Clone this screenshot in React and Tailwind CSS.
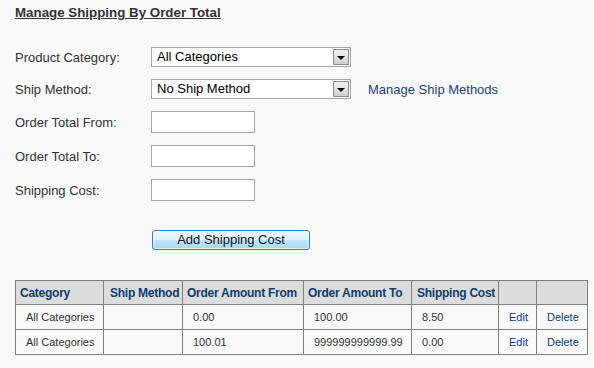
const rows = [
  { category: "All Categories", method: "", from: "0.00", to: "100.00", cost: "8.50" },
  { category: "All Categories", method: "", from: "100.01", to: "999999999999.99", cost: "0.00" },
];

function FakeSelect({ value }) {
  return (
    <div className="flex h-[20px] w-[200px] items-center border border-[#a5a5a5] bg-white">
      <span className="flex-1 pl-[5px] text-[13px] leading-[18px] text-black">{value}</span>
      <span className="m-[1px] flex h-[16px] w-[16px] items-center justify-center border border-[#8c8c8c] bg-[linear-gradient(#f4f4f4,#cfcfcf)]">
        <span className="mt-[1px] h-0 w-0 border-x-[4px] border-t-[4px] border-x-transparent border-t-black" />
      </span>
    </div>
  );
}

function TextBox() {
  return <input type="text" className="h-[22px] w-[104px] border border-[#a5a5a5] bg-white px-1 text-[13px] outline-none" />;
}

function FormRow({ label, children }) {
  return (
    <div className="flex items-center">
      <label className="w-[136px] pt-[1px] text-[13px] leading-[16px] text-[#333]">{label}</label>
      {children}
    </div>
  );
}

export default function App() {
  return (
    <div className="min-h-[368px] bg-[#f9f9f9] px-[15px] pt-[5px] font-['Liberation_Sans',Arial,sans-serif]">
      <h1 className="text-[13.33px] font-bold leading-[16px] text-[#333] underline">Manage Shipping By Order Total</h1>

      <div className="mt-[26px] flex flex-col gap-[12px]">
        <FormRow label="Product Category:">
          <FakeSelect value="All Categories" />
        </FormRow>
        <FormRow label="Ship Method:">
          <FakeSelect value="No Ship Method" />
          <a href="#" className="ml-[17px] pt-[1px] text-[13px] leading-[16px] text-[#1d3f7e]">
            Manage Ship Methods
          </a>
        </FormRow>
        <FormRow label="Order Total From:">
          <TextBox />
        </FormRow>
        <FormRow label="Order Total To:">
          <TextBox />
        </FormRow>
        <FormRow label="Shipping Cost:">
          <TextBox />
        </FormRow>
      </div>

      <button
        type="button"
        className="mt-[29px] ml-[137px] h-[20px] w-[158px] rounded-[3px] border border-[#3d7bad] bg-[linear-gradient(#ecf7fd_0%,#dcf1fc_50%,#c0e6fb_50%,#a8d9f4_100%)] text-[13px] leading-[16px] text-[#111] shadow-[inset_0_0_0_1px_rgba(255,255,255,0.6)]"
      >
        Add Shipping Cost
      </button>

      <table className="mt-[29px] w-[572px] table-fixed border-collapse text-left">
        <colgroup>
          <col className="w-[88px]" />
          <col className="w-[79px]" />
          <col className="w-[121px]" />
          <col className="w-[108px]" />
          <col className="w-[87px]" />
          <col className="w-[38px]" />
          <col className="w-[51px]" />
        </colgroup>
        <thead>
          <tr className="h-[24px] bg-[#dcdcdc] text-[12px] font-bold tracking-[-0.25px] whitespace-nowrap text-[#0f3c6f]">
            <th className="border border-[#808080] pl-[4px]">Category</th>
            <th className="border border-[#808080] pl-[6px]">Ship Method</th>
            <th className="border border-[#808080] pl-[4px]">Order Amount From</th>
            <th className="border border-[#808080] pl-[4px]">Order Amount To</th>
            <th className="border border-[#808080] pl-[5px]">Shipping Cost</th>
            <th className="border border-[#808080]" />
            <th className="border border-[#808080]" />
          </tr>
        </thead>
        <tbody className="text-[11px] text-[#333]">
          {rows.map((row, i) => (
            <tr key={i} className="h-[25px]">
              <td className="border border-[#808080] pl-[10px]">{row.category}</td>
              <td className="border border-[#808080] pl-[10px]">{row.method}</td>
              <td className="border border-[#808080] pl-[10px]">{row.from}</td>
              <td className="border border-[#808080] pl-[10px]">{row.to}</td>
              <td className="border border-[#808080] pl-[10px]">{row.cost}</td>
              <td className="border border-[#808080] pl-[10px]">
                <a href="#" className="text-[#0b3d7a]">Edit</a>
              </td>
              <td className="border border-[#808080] pl-[10px]">
                <a href="#" className="text-[#0b3d7a]">Delete</a>
              </td>
            </tr>
          ))}
        </tbody>
      </table>
    </div>
  );
}
